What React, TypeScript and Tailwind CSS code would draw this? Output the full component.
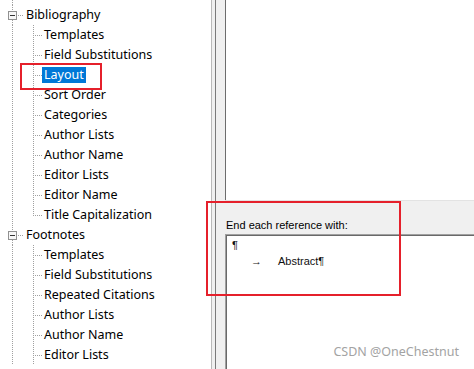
type Node = { label: string; level: 0 | 1; last?: boolean; selected?: boolean }

const nodes: Node[] = [
  { label: 'Bibliography', level: 0 },
  { label: 'Templates', level: 1 },
  { label: 'Field Substitutions', level: 1 },
  { label: 'Layout', level: 1, selected: true },
  { label: 'Sort Order', level: 1 },
  { label: 'Categories', level: 1 },
  { label: 'Author Lists', level: 1 },
  { label: 'Author Name', level: 1 },
  { label: 'Editor Lists', level: 1 },
  { label: 'Editor Name', level: 1 },
  { label: 'Title Capitalization', level: 1, last: true },
  { label: 'Footnotes', level: 0 },
  { label: 'Templates', level: 1 },
  { label: 'Field Substitutions', level: 1 },
  { label: 'Repeated Citations', level: 1 },
  { label: 'Author Lists', level: 1 },
  { label: 'Author Name', level: 1 },
  { label: 'Editor Lists', level: 1 },
]

const dot = { stroke: '#a0a0a0', strokeWidth: 1, strokeDasharray: '1 1' }

function Gutter({ node }: { node: Node }) {
  if (node.level === 0) {
    return (
      <svg width="24" height="20" className="shrink-0" shapeRendering="crispEdges">
        <line x1="12.5" y1="0" x2="12.5" y2="6" {...dot} />
        <line x1="12.5" y1="15" x2="12.5" y2="20" {...dot} />
        <line x1="18" y1="10.5" x2="24" y2="10.5" {...dot} />
        <rect x="8.5" y="6.5" width="8" height="8" fill="#f7f7f7" stroke="#919191" />
        <line x1="10" y1="10.5" x2="15" y2="10.5" stroke="#333" />
      </svg>
    )
  }
  return (
    <svg width="42" height="20" className="shrink-0" shapeRendering="crispEdges">
      <line x1="12.5" y1="0" x2="12.5" y2="20" {...dot} />
      <line x1="33.5" y1="0" x2="33.5" y2={node.last ? 11 : 20} {...dot} />
      <line x1="35" y1="10.5" x2="42" y2="10.5" {...dot} />
    </svg>
  )
}

function TreeRow({ node }: { node: Node }) {
  return (
    <div className="flex h-[20px] items-center">
      <Gutter node={node} />
      <span
        className={`px-[2px] leading-[16px] whitespace-nowrap ${
          node.selected ? 'bg-[#0078d7] text-white' : 'text-black'
        }`}
      >
        {node.label}
      </span>
    </div>
  )
}

export default function App() {
  return (
    <div className="relative flex h-[369px] w-[474px] overflow-hidden bg-white">
      {/* tree */}
      <div className="w-[211px] shrink-0 bg-white font-['Noto_Sans',sans-serif] text-[12.5px]">
        <svg width="24" height="5" className="block" shapeRendering="crispEdges">
          <line x1="12.5" y1="0" x2="12.5" y2="5" {...dot} />
        </svg>
        {nodes.map((n, i) => (
          <TreeRow key={i} node={n} />
        ))}
      </div>

      {/* splitter */}
      <div className="flex shrink-0">
        <div className="w-px bg-[#b9b9b9]" />
        <div className="w-[3px] bg-[#f0f0f0]" />
        <div className="w-px bg-[#7a7a7a]" />
        <div className="w-[9px] bg-[#f0f0f0]" />
      </div>

      {/* right pane */}
      <div className="flex min-w-0 flex-1 flex-col bg-[#f0f0f0] font-['Liberation_Sans',Arial,sans-serif] text-[11px] text-black">
        <div className="h-[200px] shrink-0 border-l border-[#6d6d6d] bg-white" />
        <div className="h-[34px] shrink-0 border-t border-[#e3e3e3] pl-[1px] pt-[18px] leading-[13px]">
          End each reference with:
        </div>
        <div className="flex-1 border-l border-t border-[#a0a0a0]">
          <div className="h-full border-l border-t border-[#696969] bg-white pl-[5px] pt-[1px] leading-[16px] text-[#111]">
            <div className="text-[11px]">¶</div>
            <div className="flex items-baseline">
              <span className="ml-[19px] text-[11px]">→</span>
              <span className="ml-[16px]">Abstract</span>
              <span className="text-[11px]">¶</span>
            </div>
          </div>
        </div>
      </div>

      {/* annotations */}
      <div className="pointer-events-none absolute left-[20px] top-[63px] h-[27px] w-[82px] border-2 border-[#e5202b]" />
      <div className="pointer-events-none absolute left-[206px] top-[201px] h-[95px] w-[195px] border-2 border-[#e5202b]" />
      <div className="pointer-events-none absolute bottom-[7px] right-[15px] font-['Noto_Sans',sans-serif] text-[12.5px] text-[#a3a3a3]">
        CSDN @OneChestnut
      </div>
    </div>
  )
}
